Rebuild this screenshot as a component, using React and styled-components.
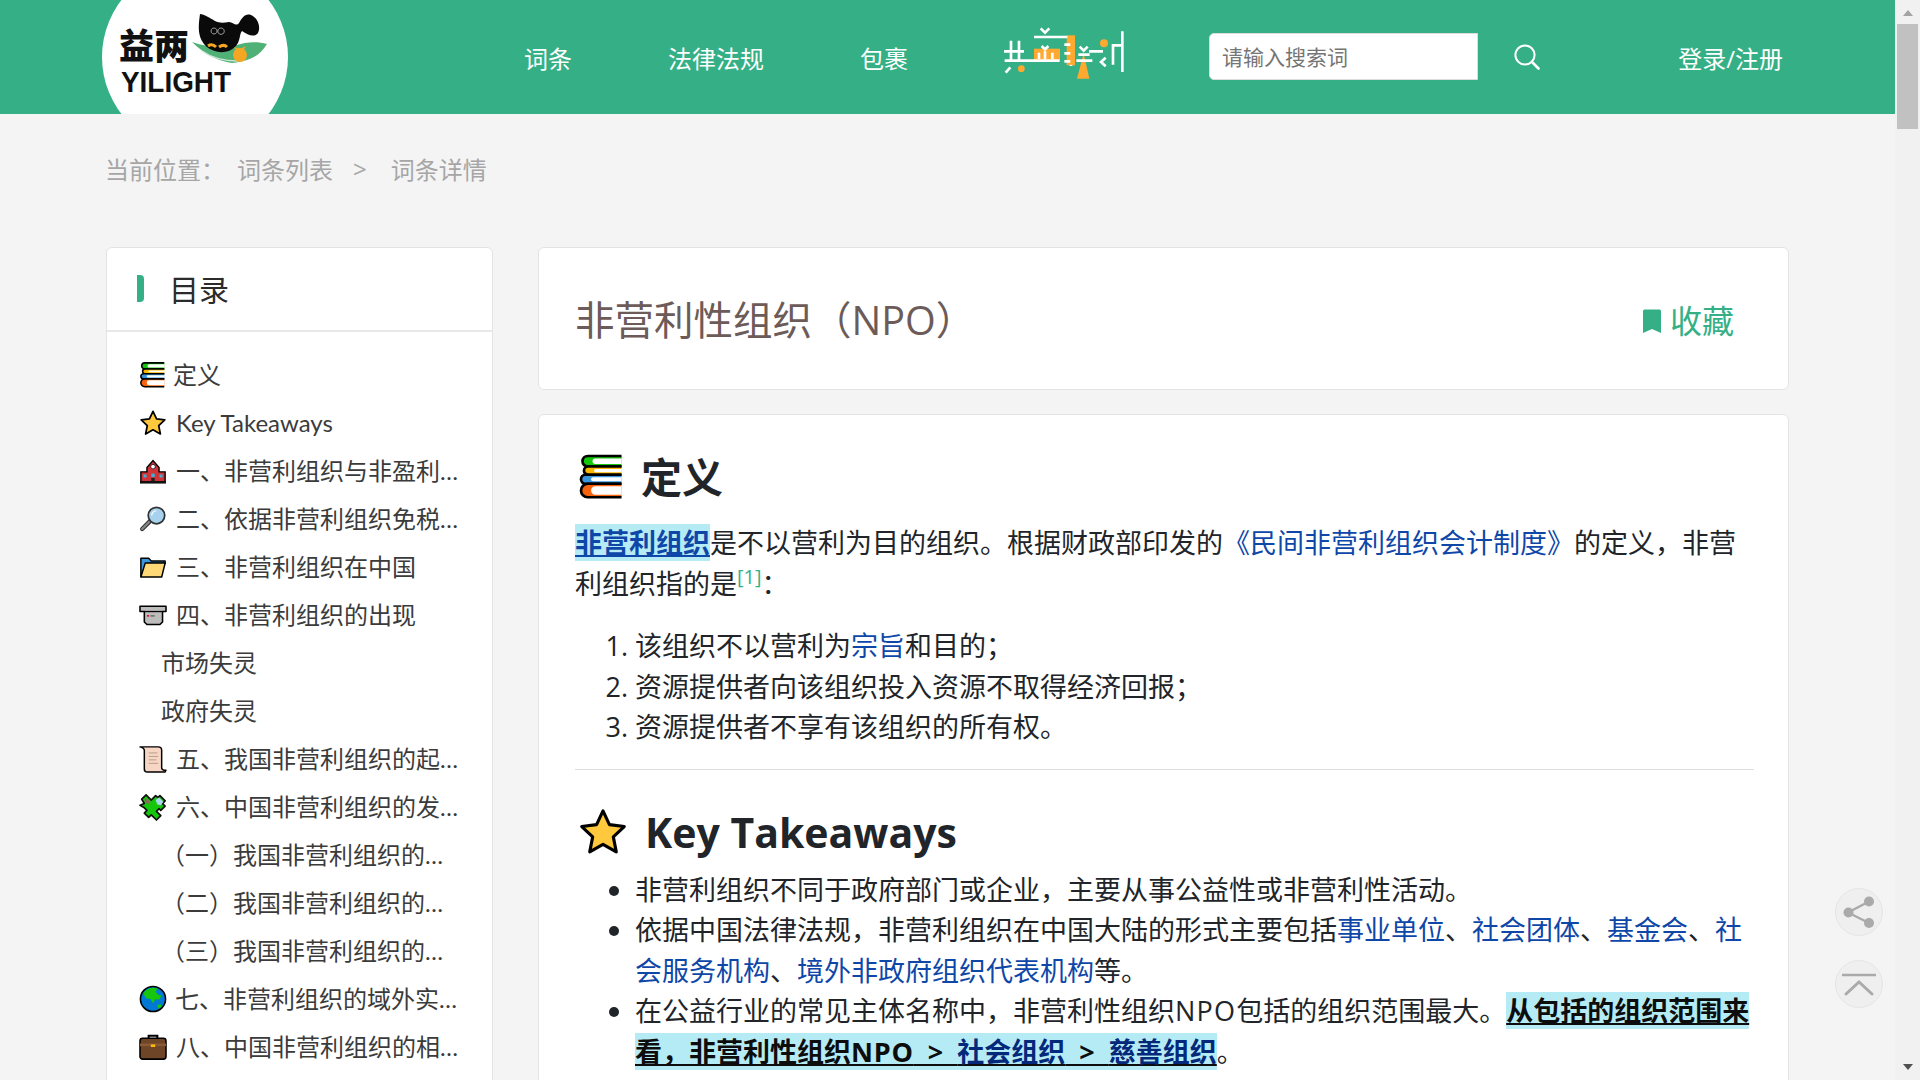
import React from 'react';
import styled, { createGlobalStyle } from 'styled-components';

const Global = createGlobalStyle`
  html, body { margin: 0; padding: 0; height: 100%; overflow: hidden; background: #f4f4f4; }
  * { box-sizing: border-box; }
  body { font-family: "Open Sans", "Noto Sans CJK SC", sans-serif; color: #212529; }
`;

const Shell = styled.div`display: flex; height: 1080px; overflow: hidden;`;
const Page = styled.div`flex: 1; min-width: 0; height: 1080px; overflow: hidden; background: #f4f4f4;`;

const Scrollbar = styled.div`
  width: 25px; background: #f1f1f1; display: flex; flex-direction: column; align-items: center;
  justify-content: space-between; padding: 10px 0;
`;
const ScrollTop = styled.div`display: flex; flex-direction: column; align-items: center; gap: 8px;`;
const Arrow = styled.div`
  width: 0; height: 0; border-left: 5.5px solid transparent; border-right: 5.5px solid transparent;
  ${p => p.$down ? 'border-top: 6px solid #505050;' : 'border-bottom: 6px solid #a3a3a3;'}
`;
const Thumb = styled.div`width: 21px; height: 105px; background: #c1c1c1;`;

const Header = styled.header`
  height: 114px; background: #35b086; display: flex; align-items: center; padding: 0 112px 0 102px; color: #fff;
`;
const LogoSvg = styled.svg`width: 186px; height: 114px; flex: none; display: block;`;
const NavLink = styled.a`
  font-size: 24px; line-height: 32px; color: #fff; margin-left: ${p => p.$ml}px; margin-top: 3px; white-space: nowrap;
`;
const BrandSvg = styled.svg`width: 150px; height: 70px; flex: none; margin-left: 81px; margin-top: -13px;`;
const Search = styled.input`
  width: 269px; height: 47px; margin-left: 70px; flex: none; margin-top: -1px;
  border: 1px solid #ddd; border-radius: 5px 0 0 5px; background: #fff; padding: 0 12px;
  font: 21px "Open Sans", "Noto Sans CJK SC", sans-serif; outline: none;
  &::placeholder { color: #757575; opacity: 1; }
`;
const SearchIcon = styled.svg`width: 26px; height: 26px; margin-left: 36px; flex: none;`;
const Login = styled.a`font-size: 24px; line-height: 32px; color: #fff; margin-left: auto; margin-top: 3px; white-space: nowrap;`;

const Crumbs = styled.nav`
  display: flex; align-items: center; height: 133px; padding: 0 0 24px 105px; font-size: 24px; color: #a6a6a6;
`;
const CrumbLabel = styled.span`margin-right: 12px;`;
const CrumbSep = styled.span`margin: 0 24px 0 20px;`;

const Columns = styled.div`display: grid; grid-template-columns: 387px 1251px; column-gap: 45px; padding-left: 106px; align-items: start;`;

const Card = styled.div`background: #fff; border: 1px solid #e4e4e4; border-radius: 6px;`;
const Toc = styled(Card)`height: 900px; overflow: hidden;`;
const TocHead = styled.div`
  height: 84px; display: flex; align-items: center; padding: 0 0 2px 30px; border-bottom: 2px solid #e8e8e8;
  font-size: 30px; color: #2b2b2b;
`;
const TocBar = styled.span`width: 7px; height: 27px; background: #35b086; border-radius: 0 4px 4px 0; margin-right: 25px;`;
const TocList = styled.ul`list-style: none; margin: 0; padding: 19px 29px 0 33px; font-family: Lato, "Noto Sans CJK SC", sans-serif;`;
const TocItem = styled.li`
  height: 48px; display: flex; align-items: center; font-size: 24px; color: #3b3b3b; gap: ${p => p.$gap ?? 10}px;
  padding-left: ${p => p.$indent || 0}px;
`;
const TocText = styled.span`flex: 1; min-width: 0; white-space: nowrap; overflow: hidden; text-overflow: ellipsis; line-height: 48px;`;
const TocIcon = styled.svg`width: 26px; height: 26px; flex: none; overflow: visible;`;

const Main = styled.div`display: flex; flex-direction: column; gap: 24px;`;
const TitleCard = styled(Card)`
  height: 143px; display: flex; align-items: center; justify-content: space-between; padding: 0 54px 0 36px;
`;
const Title = styled.h1`margin: 0; font-size: 39.5px; font-weight: 400; color: #6c5b58; line-height: 60px; margin-top: 2px;`;
const Fav = styled.a`display: flex; align-items: center; gap: 8px; color: #35b086; font-size: 32px; margin-top: 1px;`;
const FavIcon = styled.svg`width: 20px; height: 25px; margin-top: 4px;`;

const Article = styled(Card)`padding: 32px 34px 40px 36px; height: 800px; overflow: hidden;`;
const Heading = styled.h2`
  margin: 0 0 ${p => p.$bottom || 0}px; font-size: 41px; font-weight: 700; line-height: 60px;
  display: flex; align-items: center; color: #212529;
`;
const HeadIcon = styled.svg`width: ${p => p.$size}px; height: ${p => p.$size}px; flex: none; margin-left: 3px; margin-right: ${p => p.$mr}px;`;
const Para = styled.p`margin: 0 0 22px; font-size: 27px; line-height: 40.5px;`;
const OList = styled.ol`margin: 0; padding-left: 60px; font-size: 27px; line-height: 40.5px;`;
const UList = styled.ul`margin: 0; padding-left: 60px; font-size: 27px; line-height: 40.5px;`;
const Link = styled.a`color: #0e47a8;`;
const Mark = styled.span`background: #b5ebf5; font-weight: 700; text-decoration: underline; color: ${p => p.$color || '#0d0d0d'};`;
const DarkLink = styled.a`color: #04287a;`;
const Sup = styled.sup`color: #35b086; font-size: 20px; line-height: 0; font-weight: 400;`;
const Rule = styled.hr`border: 0; border-top: 1px solid #dedede; margin: 21px 0 32px;`;
const Abbr = styled.span`letter-spacing: ${p => p.$spacing}px;`;

const Float = styled.button`
  position: fixed; right: 37px; top: ${p => p.$top}px; width: 48px; height: 48px; border-radius: 50%;
  background: #efefef; border: 1px solid #e4e4e4; padding: 0; display: flex; align-items: center; justify-content: center;
`;
const FloatIcon = styled.svg`width: 36px; height: 36px;`;

const Book = ({ y, h, c, x = 3 }) => (
  <g>
    <path d={`M29 ${y}H${x + h / 2}a${h / 2} ${h / 2} 0 0 0 0 ${h}H29`} fill={c} stroke="#000" strokeWidth="1.8" />
    <path d={`M29 ${y + 1.7}H${x + h / 2 + 5}a${h / 2 - 1.7} ${h / 2 - 1.7} 0 0 0 0 ${h - 3.4}H29z`} fill="#fff" />
  </g>
);
const Books = () => (
  <>
    <Book y={2} h={7} c="#16c60c" x={3} />
    <Book y={9} h={5.5} c="#fcb900" x={4} />
    <Book y={14.5} h={6} c="#3a96dd" x={2} />
    <Book y={20.5} h={9} c="#f7630c" x={2} />
  </>
);
const StarShape = () => (
  <path d="M16 2.5l4.1 8.8 9.5 1.2-7 6.6 1.9 9.6-8.5-4.8-8.5 4.8 1.9-9.6-7-6.6 9.5-1.2z" fill="#ffc83d" stroke="#000" strokeWidth="2" strokeLinejoin="round" />
);

const icons = {
  books: <Books />,
  star: <StarShape />,
  school: (
    <>
      <path d="M2 29V17h7v-5l7-8 7 8v5h7v12z" fill="#d13438" stroke="#000" strokeWidth="1.6" />
      <rect x="1" y="27.5" width="30" height="3" fill="#111" />
      <circle cx="16" cy="11" r="2.6" fill="#fff" stroke="#000" strokeWidth=".8" />
      <rect x="5" y="20" width="3.5" height="3.5" fill="#3ab0d6" /><rect x="23.5" y="20" width="3.5" height="3.5" fill="#3ab0d6" />
      <rect x="14" y="19" width="4" height="4" fill="#3ab0d6" />
      <rect x="14" y="24" width="4" height="4" fill="#222" />
    </>
  ),
  search: (
    <>
      <path d="M12 19L3.5 27.5" stroke="#333" strokeWidth="5" strokeLinecap="round" />
      <path d="M12 19L3.5 27.5" stroke="#8a8a8a" strokeWidth="2.4" strokeLinecap="round" />
      <circle cx="20" cy="12" r="9.5" fill="#a6d2ee" stroke="#333" strokeWidth="2" />
      <path d="M14.5 12a5.5 5.5 0 0 1 5.5-5.5" stroke="#fff" strokeWidth="1.4" fill="none" />
    </>
  ),
  folder: (
    <>
      <path d="M2 27V6h9l3 3h16v3H8z" fill="#3a96dd" stroke="#000" strokeWidth="1.7" strokeLinejoin="round" />
      <path d="M2 27.5h24l4-16H7z" fill="#ffd978" stroke="#000" strokeWidth="1.7" strokeLinejoin="round" />
    </>
  ),
  camera: (
    <>
      <path d="M1 6h30v6h-4v12l-3 3H9l-3-3V12H1z" fill="#bdbdbd" stroke="#000" strokeWidth="1.8" strokeLinejoin="round" />
      <path d="M6 12h21" stroke="#000" strokeWidth="1.5" />
      <rect x="9" y="16" width="2.5" height="2" fill="#e81224" /><rect x="13" y="16" width="5" height="2" fill="#777" />
    </>
  ),
  scroll: (
    <>
      <path d="M1 2h21c3 0 4 2 4 4v20c0 2 1 3 5 3l-1 2H9c-3 0-3-2-3-4V6C6 4 5 3 1 2z" fill="#f7d7c4" stroke="#000" strokeWidth="1.7" strokeLinejoin="round" />
      <path d="M11 9h10M11 13h11M11 17h9M11 21h11" stroke="#b69a88" strokeWidth="1.1" />
    </>
  ),
  puzzle: (
    <>
      <path d="M8 2l6 6 5-5 3 2 2-2 6 6-3 3 3 3-5 5-2-2-3 3 5 5-5 5-6-6-3 3-5-5 3-3-3-3L1 14l5-2-3-5z" fill="#16c60c" stroke="#111" strokeWidth="2" strokeLinejoin="round" />
      <path d="M19 8l4-3 5 5-3 4-4-1z" fill="#a9d6ea" />
      <path d="M8 6l5 4-3 3-4-4z" fill="#8a6a5a" />
    </>
  ),
  globe: (
    <>
      <circle cx="16" cy="16" r="14.5" fill="#0078d4" stroke="#000" strokeWidth="1.8" />
      <path d="M5 9c4-6 12-7 16-5l-2 4 3 3 4 1-3 5-4-1-3 5-3-5-5-1-2-3z" fill="#16c60c" />
      <path d="M21 23l4-1 1 3-4 2z" fill="#16c60c" />
    </>
  ),
  case: (
    <>
      <path d="M11 7V3h10v4" fill="none" stroke="#000" strokeWidth="2.4" />
      <rect x="1" y="6" width="30" height="24" rx="3" fill="#6f4528" stroke="#000" strokeWidth="1.8" />
      <path d="M1 12h30v3H1z" fill="#8a5a36" />
      <rect x="13.5" y="13" width="5" height="3" fill="#ffb900" />
    </>
  ),
};

const Icon = ({ name }) => <TocIcon viewBox="1 1 30 30">{icons[name]}</TocIcon>;

const tocRows = [
  { t: '定义', i: 'books', gap: 7 },
  { t: 'Key Takeaways', i: 'star' },
  { t: '一、非营利组织与非盈利组织的区别', i: 'school' },
  { t: '二、依据非营利组织免税资格的分类', i: 'search' },
  { t: '三、非营利组织在中国', i: 'folder' },
  { t: '四、非营利组织的出现', i: 'camera' },
  { t: '市场失灵', indent: 21 },
  { t: '政府失灵', indent: 21 },
  { t: '五、我国非营利组织的起源与发展', i: 'scroll' },
  { t: '六、中国非营利组织的发展历程', i: 'puzzle' },
  { t: '（一）我国非营利组织的发展阶段', indent: 21 },
  { t: '（二）我国非营利组织的法律环境', indent: 21 },
  { t: '（三）我国非营利组织的现状分析', indent: 21 },
  { t: '七、非营利组织的域外实践与比较', i: 'globe', gap: 9 },
  { t: '八、中国非营利组织的相关法律法规', i: 'case' },
];

export default function App() {
  return (
    <>
      <Global />
      <Shell>
        <Page>
          <Header>
            <LogoSvg viewBox="0 0 186 114">
              <circle cx="93" cy="57" r="93" fill="#fff" />
              <text x="17" y="59" fontFamily="'Noto Sans CJK SC',sans-serif" fontWeight="900" fontSize="35" fill="#111">益两</text>
              <text x="19" y="92" fontFamily="'Liberation Sans',sans-serif" fontWeight="700" fontSize="30" textLength="110" lengthAdjust="spacingAndGlyphs" fill="#111">YILIGHT</text>
              <path d="M90 42c12 12 26 19 40 21 20-2 28-8 35-19-10-3-22-2-30 1-14 4-30 2-45-3z" fill="#4fb176" />
              <path d="M100 51c10 7 22 10 36 10" stroke="#cfe7d6" strokeWidth="1.5" fill="none" />
              <path d="M98 14c-2 14-2 22 4 30 6 8 22 12 31 3 6-6 4-13 7-16 6 4 12 7 16 2 3-6 0-15-7-18-6-2-9 3-12 8-3 4-6-1-10-1-6 1-10 1-14-1-5-3-11-7-15-7z" fill="#0a0a0a" />
              <path d="M112 28a3 3 0 1 0 .1 0M119 28a3.2 3.2 0 1 0 .1 0" stroke="#ddd" strokeWidth=".7" fill="none" />
              <path d="M106 46c3-2 6-1 8 1M117 47c3-2 6-2 8 0" stroke="#f5a623" strokeWidth="3" fill="none" />
              <ellipse cx="138" cy="55" rx="7" ry="7" fill="#f5a623" />
              <path d="M132 47l6 2 6-3-3 5h-6z" fill="#f5a623" />
            </LogoSvg>
            <NavLink $ml={236}>词条</NavLink>
            <NavLink $ml={96}>法律法规</NavLink>
            <NavLink $ml={96}>包裹</NavLink>
            <BrandSvg viewBox="0 0 450 210">
              <g fill="#ffa930" stroke="none">
                <rect x="135" y="98" width="78" height="34" />
                <rect x="233" y="58" width="25" height="90" />
                <path d="M284 112l-20 76h37z" />
                <circle cx="97" cy="158" r="10" />
                <circle cx="345" cy="82" r="12" />
              </g>
              <g stroke="#fff" strokeWidth="8" fill="none">
                <path d="M45 106h60M47 134h165M66 74v58M90 74v58M50 170l14-16" />
                <path d="M155 37l13 13 13-13M135 63h100M158 90l10 10 10-10M150 110v20M168 106v24M190 110v20" />
                <path d="M226 86h18M226 112h18M226 136h18M246 150v-4" />
                <path d="M272 92l12 12 12-12M268 116h34M262 134h48M300 106h42" />
                <path d="M350 125l-14 13 14 13M372 88v58M368 88h32M400 46v122" />
              </g>
            </BrandSvg>
            <Search placeholder="请输入搜索词" />
            <SearchIcon viewBox="0 0 26 26">
              <circle cx="11" cy="11" r="9.6" fill="none" stroke="#fff" strokeWidth="2" />
              <path d="M18 18l6.5 6.5" stroke="#fff" strokeWidth="2.6" strokeLinecap="round" />
            </SearchIcon>
            <Login>登录/注册</Login>
          </Header>
          <Crumbs>
            <CrumbLabel>当前位置：</CrumbLabel>
            <span>词条列表</span>
            <CrumbSep>&gt;</CrumbSep>
            <span>词条详情</span>
          </Crumbs>
          <Columns>
            <Toc>
              <TocHead><TocBar />目录</TocHead>
              <TocList>
                {tocRows.map(r => (
                  <TocItem key={r.t} $indent={r.indent} $gap={r.gap}>
                    {r.i && <Icon name={r.i} />}
                    <TocText>{r.t}</TocText>
                  </TocItem>
                ))}
              </TocList>
            </Toc>
            <Main>
              <TitleCard>
                <Title>非营利性组织（NPO）</Title>
                <Fav>
                  <FavIcon viewBox="0 0 20 25"><path d="M1 2a1.5 1.5 0 0 1 1.5-1.5h15A1.5 1.5 0 0 1 19 2v22l-9-4-9 4z" fill="#35b086" /></FavIcon>
                  收藏
                </Fav>
              </TitleCard>
              <Article>
                <Heading $bottom={16}>
                  <HeadIcon viewBox="0 0 32 32" $size={48} $mr={15}><Books /></HeadIcon>定义
                </Heading>
                <Para>
                  <Mark $color="#0e47a8">非营利组织</Mark>是不以营利为目的组织。根据财政部印发的<Link>《民间非营利组织会计制度》</Link>的定义，非营利组织指的是<Sup>[1]</Sup>：
                </Para>
                <OList>
                  <li>该组织不以营利为<Link>宗旨</Link>和目的；</li>
                  <li>资源提供者向该组织投入资源不取得经济回报；</li>
                  <li>资源提供者不享有该组织的所有权。</li>
                </OList>
                <Rule />
                <Heading $bottom={8}>
                  <HeadIcon viewBox="0 0 32 32" $size={50} $mr={17}><StarShape /></HeadIcon>Key Takeaways
                </Heading>
                <UList>
                  <li>非营利组织不同于政府部门或企业，主要从事公益性或非营利性活动。</li>
                  <li>依据中国法律法规，非营利组织在中国大陆的形式主要包括<Link>事业单位</Link>、<Link>社会团体</Link>、<Link>基金会</Link>、<Link>社会服务机构</Link>、<Link>境外非政府组织代表机构</Link>等。</li>
                  <li>在公益行业的常见主体名称中，非营利性组织<Abbr $spacing={1.2}>NPO</Abbr>包括的组织范围最大。<Mark>从包括的组织范围来看，非营利性组织<Abbr $spacing={0.8}>NPO</Abbr>{'\u00a0\u00a0>\u00a0\u00a0'}<DarkLink>社会组织</DarkLink>{'\u00a0\u00a0>\u00a0\u00a0'}<DarkLink>慈善组织</DarkLink></Mark>。</li>
                </UList>
              </Article>
            </Main>
          </Columns>
        </Page>
        <Scrollbar>
          <ScrollTop><Arrow /><Thumb /></ScrollTop>
          <Arrow $down />
        </Scrollbar>
      </Shell>
      <Float $top={888}>
        <FloatIcon viewBox="0 0 36 36">
          <path d="M7 18.5L28 7.5M7 18.5L28 29" stroke="#aaa" strokeWidth="2.5" />
          <circle cx="7.5" cy="18.5" r="5" fill="#aaa" /><circle cx="28" cy="7.5" r="5" fill="#aaa" /><circle cx="28" cy="29" r="5" fill="#aaa" />
        </FloatIcon>
      </Float>
      <Float $top={960}>
        <FloatIcon viewBox="0 0 36 36">
          <path d="M1 9h34" stroke="#aaa" strokeWidth="2.6" />
          <path d="M5 28L18 16l13 12" stroke="#aaa" strokeWidth="3" fill="none" strokeLinecap="round" />
        </FloatIcon>
      </Float>
    </>
  );
}
